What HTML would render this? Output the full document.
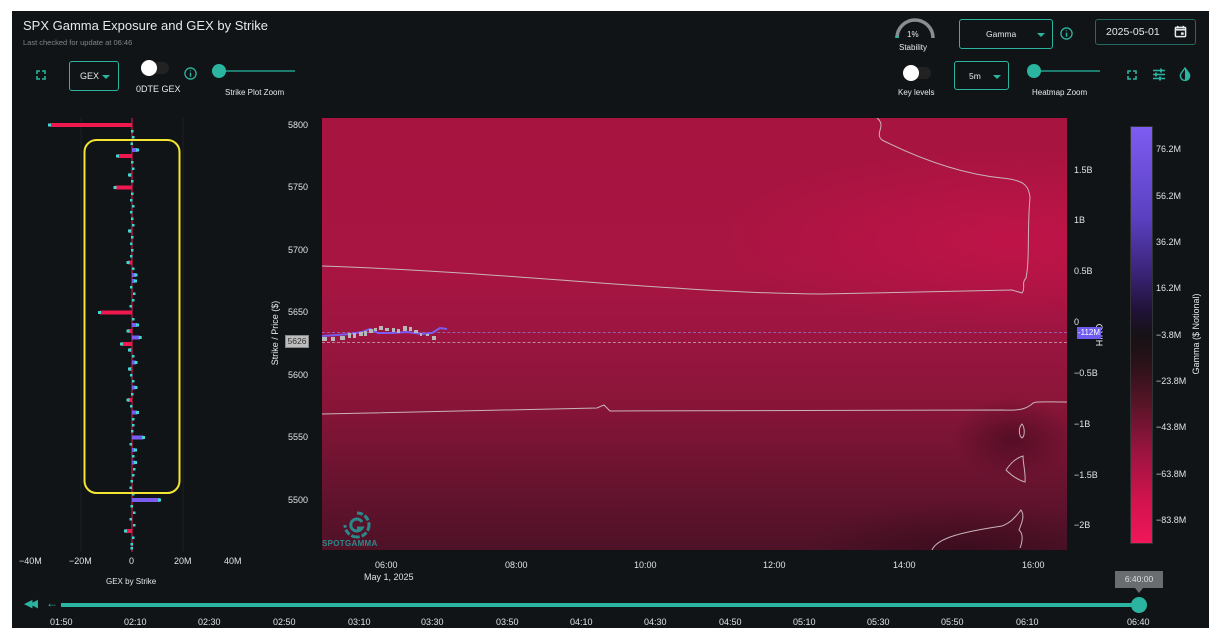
<!DOCTYPE html>
<html><head><meta charset="utf-8"><style>
*{margin:0;padding:0;box-sizing:border-box}
body{width:1223px;height:639px;background:#fff;font-family:"Liberation Sans",sans-serif;position:relative;overflow:hidden}
#p{position:absolute;left:12px;top:11px;width:1197px;height:617px;background:#111417}
.t{position:absolute;color:#e6e8ea;white-space:nowrap}
.s{font-size:9px}
.teal{color:#2bb5a0}
.box{position:absolute;border:1px solid #2bb5a0;border-radius:3px}
.tog{position:absolute;width:26px;height:12px;border-radius:6px;background:#222}
.tog:before{content:"";position:absolute;left:-2px;top:-2px;width:16px;height:16px;border-radius:50%;background:#fff}
.caret{position:absolute;width:0;height:0;border-left:4px solid transparent;border-right:4px solid transparent;border-top:4px solid #2bb5a0}
.ax{position:absolute;font-size:9px;color:#dfe2e5}
</style></head><body>
<div id="p"></div>
<div class="t" style="left:23px;top:18px;font-size:13px">SPX Gamma Exposure and GEX by Strike</div>
<div class="t" style="left:23px;top:38px;font-size:7.5px;color:#80858a">Last checked for update at 06:46</div>

<svg style="position:absolute;left:36px;top:70px" width="10" height="10" viewBox="0 0 10 10" fill="none" stroke="#2bb5a0" stroke-width="1.6"><path d="M1 4V1h3M6 1h3v3M9 6v3H6M4 9H1V6"/></svg>
<div class="box" style="left:69px;top:61px;width:50px;height:30px"></div>
<div class="t s" style="left:80px;top:71px">GEX</div><div class="caret" style="left:102px;top:75px"></div>
<div class="tog" style="left:143px;top:62px"></div>
<div class="t s" style="left:136px;top:84px">0DTE GEX</div>
<svg style="position:absolute;left:184px;top:67px" width="13" height="13" viewBox="0 0 14 14"><circle cx="7" cy="7" r="6" fill="none" stroke="#2bb5a0" stroke-width="1.4"/><path d="M7 6v4.5M7 3.6v1" stroke="#2bb5a0" stroke-width="1.5"/></svg>
<div style="position:absolute;left:219px;top:70px;width:76px;height:2px;background:#1f7d70"></div>
<div style="position:absolute;left:212px;top:64px;width:14px;height:14px;border-radius:50%;background:#2bb5a0"></div>
<div class="t" style="left:225px;top:88px;font-size:8px">Strike Plot Zoom</div>

<svg style="position:absolute;left:893px;top:14px" width="46" height="26" viewBox="0 0 46 26"><path d="M4 24A18 18 0 0 1 40 24" fill="none" stroke="#8a8d90" stroke-width="3.5"/><path d="M4 24v-2" stroke="#2bb5a0" stroke-width="3.5"/></svg>
<div class="t" style="left:907px;top:30px;font-size:8px">1%</div>
<div class="t" style="left:899px;top:43px;font-size:8px">Stability</div>
<div class="box" style="left:959px;top:19px;width:94px;height:30px"></div>
<div class="t" style="left:986px;top:29px;font-size:8.5px">Gamma</div><div class="caret" style="left:1037px;top:33px"></div>
<svg style="position:absolute;left:1060px;top:27px" width="13" height="13" viewBox="0 0 14 14"><circle cx="7" cy="7" r="6" fill="none" stroke="#2bb5a0" stroke-width="1.4"/><path d="M7 6v4.5M7 3.6v1" stroke="#2bb5a0" stroke-width="1.5"/></svg>
<div class="box" style="left:1095px;top:19px;width:101px;height:26px;border-color:#1f6b60"></div>
<div class="t" style="left:1106px;top:26px;font-size:10.5px">2025-05-01</div>
<svg style="position:absolute;left:1174px;top:25px" width="13" height="13" viewBox="0 0 14 14"><rect x="1.5" y="2.5" width="11" height="10" rx="1" fill="none" stroke="#e6e8ea" stroke-width="1.6"/><path d="M1.5 5h11" stroke="#e6e8ea" stroke-width="2"/><rect x="7.5" y="8" width="3" height="2.5" fill="#e6e8ea"/><path d="M4 1v2.5M10 1v2.5" stroke="#e6e8ea" stroke-width="1.5"/></svg>
<div class="tog" style="left:905px;top:67px"></div>
<div class="t" style="left:898px;top:88px;font-size:8px">Key levels</div>
<div class="box" style="left:954px;top:61px;width:55px;height:29px"></div>
<div class="t" style="left:969px;top:71px;font-size:8.5px">5m</div><div class="caret" style="left:993px;top:75px"></div>
<div style="position:absolute;left:1034px;top:70px;width:66px;height:2px;background:#1f7d70"></div>
<div style="position:absolute;left:1027px;top:64px;width:14px;height:14px;border-radius:50%;background:#2bb5a0"></div>
<div class="t" style="left:1032px;top:88px;font-size:8px">Heatmap Zoom</div>
<svg style="position:absolute;left:1127px;top:70px" width="10" height="10" viewBox="0 0 10 10" fill="none" stroke="#2bb5a0" stroke-width="1.6"><path d="M1 4V1h3M6 1h3v3M9 6v3H6M4 9H1V6"/></svg>
<svg style="position:absolute;left:1152px;top:68px" width="14" height="13" viewBox="0 0 14 13" stroke="#2bb5a0" stroke-width="1.4"><path d="M1 2.5h12M1 6.5h12M1 10.5h12"/><path d="M9 0.5v4M4 4.5v4M8 8.5v4" stroke-width="1.8"/></svg>
<svg style="position:absolute;left:1179px;top:67px" width="12" height="14" viewBox="0 0 12 14"><path d="M6 1L2 6.5A4.6 4.6 0 1 0 10 6.5Z" fill="none" stroke="#2bb5a0" stroke-width="1.4"/><path d="M6 1V13A4.6 4.6 0 0 0 10 6.5Z" fill="#2bb5a0"/></svg>

<svg style="position:absolute;left:0;top:0" width="320" height="600">
<g stroke="#1c1f23" stroke-width="1"><line x1="81" y1="118" x2="81" y2="552"/><line x1="183" y1="118" x2="183" y2="552"/></g>
<line x1="132" y1="118" x2="132" y2="552" stroke="#e81a50" stroke-width="1"/>
<g fill="#f0184f">
<rect x="50.4" y="123" width="81.6" height="4"/><rect x="118" y="154" width="14" height="4"/><rect x="115.4" y="185.5" width="16.6" height="4"/><rect x="100.1" y="310.5" width="31.9" height="4"/><rect x="121.8" y="342" width="10.2" height="4"/><rect x="128.2" y="329" width="3.8" height="4"/><rect x="128.2" y="398" width="3.8" height="4"/><rect x="125.6" y="529" width="6.4" height="4"/><rect x="128.2" y="260.5" width="3.8" height="4"/><rect x="129.4" y="173" width="2.6" height="4"/><rect x="129.4" y="229" width="2.6" height="4"/><rect x="129.4" y="348" width="2.6" height="4"/><rect x="129.4" y="367" width="2.6" height="4"/>
</g>
<g fill="#7b5cf0">
<rect x="132" y="148" width="5.1" height="4"/><rect x="132" y="273" width="3.8" height="4"/><rect x="132" y="279" width="3" height="4"/><rect x="132" y="323" width="5.1" height="4"/><rect x="132" y="335.5" width="7.7" height="4"/><rect x="132" y="360.5" width="3.8" height="4"/><rect x="132" y="385.5" width="3.3" height="4"/><rect x="132" y="410.5" width="5.1" height="4"/><rect x="132" y="435.5" width="11.5" height="4"/><rect x="132" y="448" width="3" height="4"/><rect x="132" y="460.5" width="3" height="4"/><rect x="132" y="498" width="28" height="4"/>
</g>
<g fill="#3fd8d2">
<rect x="48" y="123.5" width="3" height="3"/><rect x="116" y="154.5" width="3" height="3"/><rect x="113.5" y="186" width="3" height="3"/><rect x="98" y="311" width="3" height="3"/><rect x="120" y="342.5" width="3" height="3"/><rect x="126.5" y="329.5" width="3" height="3"/><rect x="126.5" y="398.5" width="3" height="3"/><rect x="124" y="529.5" width="3" height="3"/><rect x="126.5" y="261" width="3" height="3"/><rect x="128" y="173.5" width="3" height="3"/><rect x="128" y="229.5" width="3" height="3"/><rect x="128" y="348.5" width="3" height="3"/><rect x="128" y="367.5" width="3" height="3"/>
<rect x="136" y="148.5" width="3" height="3"/><rect x="134.5" y="273.5" width="3" height="3"/><rect x="134" y="279.5" width="3" height="3"/><rect x="136" y="323.5" width="3" height="3"/><rect x="138.7" y="336" width="3" height="3"/><rect x="134.5" y="361" width="3" height="3"/><rect x="134.5" y="386" width="3" height="3"/><rect x="136" y="411" width="3" height="3"/><rect x="142" y="436" width="3" height="3"/><rect x="134" y="448.5" width="3" height="3"/><rect x="134" y="461" width="3" height="3"/><rect x="158" y="498.5" width="3" height="3"/>
<rect x="131" y="130" width="2.5" height="2.5"/><rect x="132" y="136" width="2.5" height="2.5"/><rect x="130.5" y="142.5" width="2.5" height="2.5"/><rect x="131" y="161" width="2.5" height="2.5"/><rect x="132" y="167.5" width="2.5" height="2.5"/><rect x="131" y="180" width="2.5" height="2.5"/><rect x="131" y="192.5" width="2.5" height="2.5"/><rect x="130" y="199" width="2.5" height="2.5"/><rect x="132" y="205" width="2.5" height="2.5"/><rect x="130" y="211" width="2.5" height="2.5"/><rect x="131" y="217.5" width="2.5" height="2.5"/><rect x="132" y="224" width="2.5" height="2.5"/><rect x="131" y="236" width="2.5" height="2.5"/><rect x="130" y="242.5" width="2.5" height="2.5"/><rect x="131" y="249" width="2.5" height="2.5"/><rect x="130" y="255" width="2.5" height="2.5"/><rect x="132" y="267.5" width="2.5" height="2.5"/><rect x="130" y="286" width="2.5" height="2.5"/><rect x="133" y="292.5" width="2.5" height="2.5"/><rect x="132" y="299" width="2.5" height="2.5"/><rect x="129.5" y="305" width="2.5" height="2.5"/><rect x="132" y="318" width="2.5" height="2.5"/><rect x="132" y="355" width="2.5" height="2.5"/><rect x="130" y="374" width="2.5" height="2.5"/><rect x="132" y="380" width="2.5" height="2.5"/><rect x="131" y="393" width="2.5" height="2.5"/><rect x="130" y="405" width="2.5" height="2.5"/><rect x="132" y="418" width="2.5" height="2.5"/><rect x="132" y="424" width="2.5" height="2.5"/><rect x="131" y="430" width="2.5" height="2.5"/><rect x="129.5" y="443" width="2.5" height="2.5"/><rect x="132" y="455" width="2.5" height="2.5"/><rect x="133" y="468" width="2.5" height="2.5"/><rect x="132" y="474" width="2.5" height="2.5"/><rect x="130.5" y="480" width="2.5" height="2.5"/><rect x="129.5" y="486.5" width="2.5" height="2.5"/><rect x="132" y="493" width="2.5" height="2.5"/><rect x="130.5" y="505" width="2.5" height="2.5"/><rect x="133" y="511.5" width="2.5" height="2.5"/><rect x="129.5" y="518" width="2.5" height="2.5"/><rect x="133" y="524" width="2.5" height="2.5"/><rect x="132" y="536.5" width="2.5" height="2.5"/><rect x="130.5" y="543" width="2.5" height="2.5"/><rect x="130.5" y="547" width="2.5" height="2.5"/>
</g>
<rect x="84.5" y="140" width="95" height="353" rx="12" fill="none" stroke="#f3e531" stroke-width="2"/>
</svg>
<div class="ax" style="left:19px;top:556px">−40M</div><div class="ax" style="left:69px;top:556px">−20M</div><div class="ax" style="left:129px;top:556px">0</div><div class="ax" style="left:174px;top:556px">20M</div><div class="ax" style="left:224px;top:556px">40M</div>
<div class="t" style="left:106px;top:577px;font-size:8px">GEX by Strike</div>

<div class="ax" style="left:288px;top:120px">5800</div><div class="ax" style="left:288px;top:182px">5750</div><div class="ax" style="left:288px;top:245px">5700</div><div class="ax" style="left:288px;top:307px">5650</div><div class="ax" style="left:288px;top:370px">5600</div><div class="ax" style="left:288px;top:432px">5550</div><div class="ax" style="left:288px;top:495px">5500</div>
<div class="t" style="left:230px;top:328px;font-size:9px;transform:rotate(-90deg);transform-origin:center;width:90px;text-align:center">Strike / Price ($)</div>
<div style="position:absolute;left:285px;top:335px;width:24px;height:13px;background:#bdbdbd;border:1px solid #888;font-size:8.5px;color:#333;text-align:center;line-height:11px">5626</div>

<div style="position:absolute;left:322px;top:118px;width:745px;height:432px;overflow:hidden;background:linear-gradient(#a81440 0%,#a91542 35%,#9c1541 50%,#8a1539 65%,#6c1330 82%,#4e1227 100%)">
<div style="position:absolute;inset:0;background:radial-gradient(ellipse 300px 90px at 700px 122px,rgba(210,18,78,.55),rgba(210,18,78,0) 100%)"></div>
<div style="position:absolute;inset:0;background:radial-gradient(ellipse 60px 40px at 690px 320px,rgba(30,5,15,.4),rgba(30,5,15,0))"></div>
<div style="position:absolute;inset:0;background:radial-gradient(ellipse 160px 50px at 640px 432px,rgba(30,5,15,.4),rgba(30,5,15,0))"></div>
<svg width="745" height="432" style="position:absolute;left:0;top:0" fill="none" stroke="#c9b3bd" stroke-width="1">
<path d="M0 148C200 155 350 175 500 176L690 172L700 175C704 170 699 165 704 160C708 140 705 110 708 80C707 66 700 62 680 60C640 56 600 42 560 22C552 15 565 8 555 0"/>
<path d="M0 296C100 294 200 292 275 290L282 287L288 293C380 294 520 293 680 292C700 293 705 290 710 286C712 283 720 284 745 284"/>
<path d="M700 306C696 310 697 318 700 320C703 318 703 310 700 306Z"/>
<path d="M701 338C694 340 688 346 684 352C690 358 696 362 703 364C704 356 701 346 701 338Z"/>
<path d="M610 432C615 420 640 414 680 408C690 404 694 398 699 392C703 398 700 404 697 412C702 416 700 425 698 430"/>
</svg>
<div style="position:absolute;left:0;top:214px;width:745px;border-top:1px dashed #9a7cd8;opacity:.7"></div>
<div style="position:absolute;left:0;top:224px;width:745px;border-top:1px dashed #d0b6c0;opacity:.7"></div>
<svg width="130" height="40" style="position:absolute;left:0;top:200px">
<path d="M0 18L15 17L28 16L40 14L48 11L56 15L70 15L85 14L100 16L110 15L118 10L125 11" fill="none" stroke="#7b5cf0" stroke-width="2"/>
<g fill="#b8b8b8"><rect x="0" y="19" width="5" height="4"/><rect x="9" y="19" width="4" height="4"/><rect x="18" y="18" width="5" height="4"/><rect x="26" y="15" width="3" height="5"/><rect x="31" y="15" width="3" height="5"/><rect x="37" y="14" width="4" height="4"/><rect x="42" y="13" width="3" height="5"/><rect x="47" y="11" width="4" height="4"/><rect x="52" y="10" width="3" height="3"/><rect x="57" y="8" width="4" height="4"/><rect x="63" y="10" width="4" height="3"/><rect x="70" y="10" width="3" height="4"/><rect x="75" y="11" width="3" height="4"/><rect x="81" y="8" width="4" height="5"/><rect x="87" y="9" width="3" height="4"/><rect x="92" y="12" width="4" height="3"/><rect x="98" y="15" width="2" height="3"/><rect x="104" y="16" width="3" height="2"/><rect x="110" y="18" width="4" height="4"/></g>
</svg>
<svg width="30" height="30" viewBox="0 0 30 30" style="position:absolute;left:20px;top:392px" fill="none" stroke="#2a8a8a" stroke-width="3"><path d="M15 3A12 12 0 0 1 27 15M27 15A12 12 0 0 1 15 27M15 27A12 12 0 0 1 3 15" stroke-dasharray="6 2"/><path d="M20 12A6 6 0 1 0 20 18H15"/></svg>
<div style="position:absolute;left:0;top:421px;font-size:8px;color:#2a8a8a;font-weight:bold;letter-spacing:.3px">SPOTGAMMA</div>
</div>

<div class="ax" style="left:1074px;top:165px">1.5B</div><div class="ax" style="left:1074px;top:215px">1B</div><div class="ax" style="left:1074px;top:266px">0.5B</div><div class="ax" style="left:1074px;top:317px">0</div><div class="ax" style="left:1074px;top:368px">−0.5B</div><div class="ax" style="left:1074px;top:419px">−1B</div><div class="ax" style="left:1074px;top:470px">−1.5B</div><div class="ax" style="left:1074px;top:520px">−2B</div>
<div class="t" style="left:1088px;top:330px;font-size:9px;transform:rotate(-90deg)">HIRO</div>
<div style="position:absolute;left:1077px;top:327px;width:24px;height:12px;background:#6e5cf0;color:#fff;font-size:8px;line-height:12px;text-align:center">-112M</div>

<div style="position:absolute;left:1130px;top:126px;width:23px;height:418px;border:1px solid #333;background:linear-gradient(#7d5cf2 0%,#5a40c0 22%,#3a2478 35%,#201238 44%,#161216 50%,#2a1218 57%,#5a1428 67%,#9a1440 78%,#d2144d 90%,#f0165a 100%)"></div>
<div class="ax" style="left:1156px;top:144px">76.2M</div><div class="ax" style="left:1156px;top:191px">56.2M</div><div class="ax" style="left:1156px;top:237px">36.2M</div><div class="ax" style="left:1156px;top:283px">16.2M</div><div class="ax" style="left:1156px;top:330px">−3.8M</div><div class="ax" style="left:1156px;top:376px">−23.8M</div><div class="ax" style="left:1156px;top:422px">−43.8M</div><div class="ax" style="left:1156px;top:469px">−63.8M</div><div class="ax" style="left:1156px;top:515px">−83.8M</div>
<div class="t" style="left:1146px;top:329px;font-size:9px;transform:rotate(-90deg);width:100px;text-align:center">Gamma ($ Notional)</div>

<div class="ax" style="left:375px;top:560px">06:00</div><div class="ax" style="left:505px;top:560px">08:00</div><div class="ax" style="left:634px;top:560px">10:00</div><div class="ax" style="left:763px;top:560px">12:00</div><div class="ax" style="left:893px;top:560px">14:00</div><div class="ax" style="left:1022px;top:560px">16:00</div>
<div class="ax" style="left:364px;top:572px">May 1, 2025</div>

<div class="t teal" style="left:24px;top:597px;font-size:11px;letter-spacing:-3px">◀◀</div>
<div class="t teal" style="left:46px;top:596px;font-size:12px">←</div>
<div style="position:absolute;left:61px;top:603px;width:1078px;height:4px;background:#2bb5a0"></div>
<div style="position:absolute;left:1131px;top:597px;width:16px;height:16px;border-radius:50%;background:#2bb5a0"></div>
<div style="position:absolute;left:1115px;top:571px;width:48px;height:17px;background:#6a6d70;color:#ddd;font-size:8.5px;line-height:17px;text-align:center">6:40:00</div>
<div style="position:absolute;left:1135px;top:588px;border-left:4px solid transparent;border-right:4px solid transparent;border-top:5px solid #6a6d70"></div>
<div class="ax" style="left:50px;top:617px">01:50</div><div class="ax" style="left:124px;top:617px">02:10</div><div class="ax" style="left:198px;top:617px">02:30</div><div class="ax" style="left:273px;top:617px">02:50</div><div class="ax" style="left:348px;top:617px">03:10</div><div class="ax" style="left:421px;top:617px">03:30</div><div class="ax" style="left:496px;top:617px">03:50</div><div class="ax" style="left:570px;top:617px">04:10</div><div class="ax" style="left:644px;top:617px">04:30</div><div class="ax" style="left:719px;top:617px">04:50</div><div class="ax" style="left:793px;top:617px">05:10</div><div class="ax" style="left:867px;top:617px">05:30</div><div class="ax" style="left:941px;top:617px">05:50</div><div class="ax" style="left:1016px;top:617px">06:10</div><div class="ax" style="left:1127px;top:617px">06:40</div>
</body></html>
